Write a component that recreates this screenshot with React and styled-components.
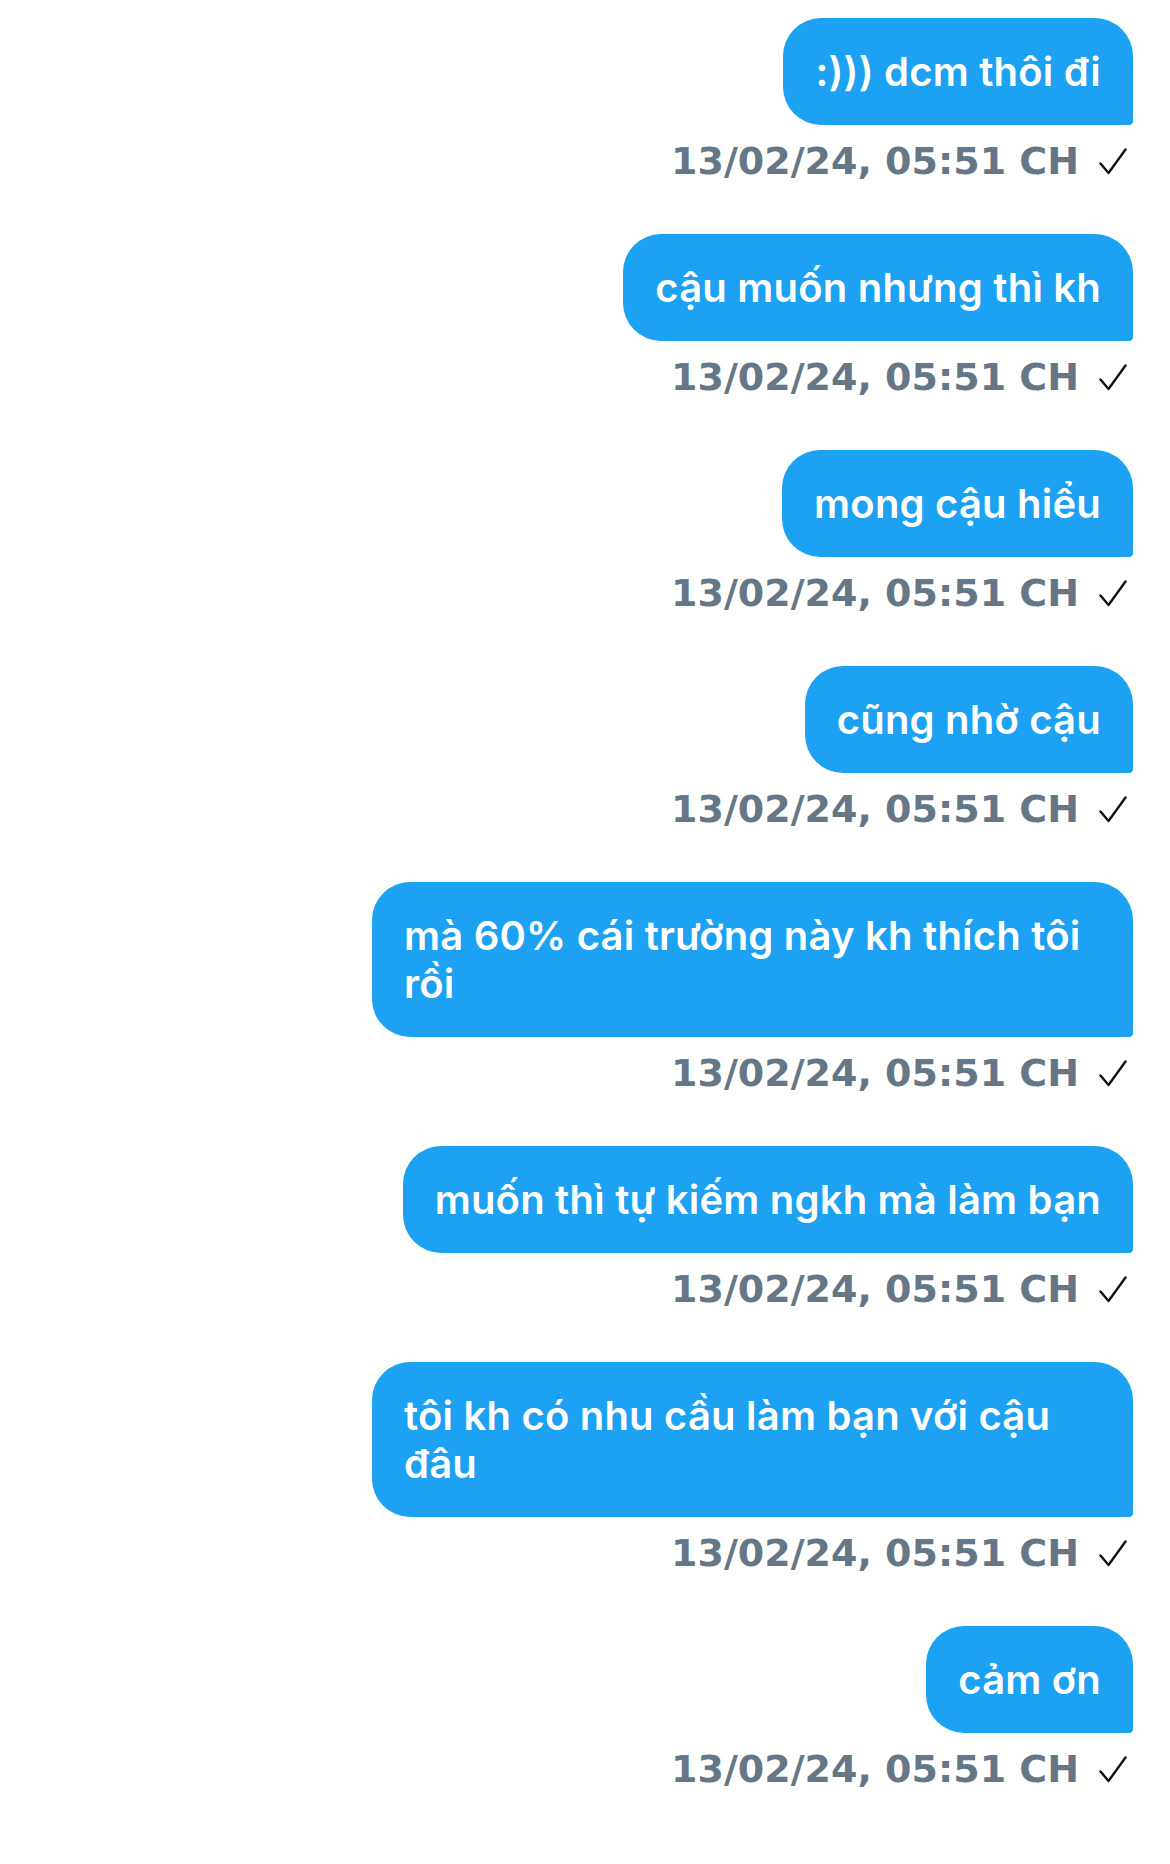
import React from 'react';
import styled, { createGlobalStyle } from 'styled-components';

const GlobalStyle = createGlobalStyle`
  body {
    margin: 0;
    background: #ffffff;
    font-family: Inter, "Noto Sans", sans-serif;
  }
`;

const Thread = styled.div`
  display: flex;
  flex-direction: column;
  align-items: flex-end;
  gap: 51px;
  padding: 18px 37px 60px 0;
`;

const Message = styled.div`
  display: flex;
  flex-direction: column;
  align-items: flex-end;
  gap: 14px;
`;

const Bubble = styled.div`
  max-width: 697px;
  padding: 30px 32px 29px;
  background: #1da1f2;
  color: #ffffff;
  font-size: 40px;
  font-weight: 600;
  line-height: 48px;
  letter-spacing: 0.2px;
  border-radius: 38px 38px 4px 38px;
`;

const Meta = styled.div`
  display: flex;
  align-items: center;
  gap: 20px;
  padding-right: 6px;
`;

const Time = styled.span`
  color: #657786;
  font-family: "DejaVu Sans", Inter, sans-serif;
  font-size: 38px;
  font-weight: 700;
  line-height: 44px;
`;

const Check = () => (
  <svg width="28" height="27" viewBox="0 0 28 27" fill="none">
    <path d="M1.5 15.5 L9.5 25 L26.5 1.5" stroke="#111" strokeWidth="2.4" strokeLinecap="round" strokeLinejoin="round" />
  </svg>
);

const messages = [
  ':))) dcm thôi đi',
  'cậu muốn nhưng thì kh',
  'mong cậu hiểu',
  'cũng nhờ cậu',
  'mà 60% cái trường này kh thích tôi rồi',
  'muốn thì tự kiếm ngkh mà làm bạn',
  'tôi kh có nhu cầu làm bạn với cậu đâu',
  'cảm ơn',
];

export default function App() {
  return (
    <>
      <GlobalStyle />
      <Thread>
        {messages.map((text, i) => (
          <Message key={i}>
            <Bubble>{text}</Bubble>
            <Meta>
              <Time>13/02/24, 05:51 CH</Time>
              <Check />
            </Meta>
          </Message>
        ))}
      </Thread>
    </>
  );
}
